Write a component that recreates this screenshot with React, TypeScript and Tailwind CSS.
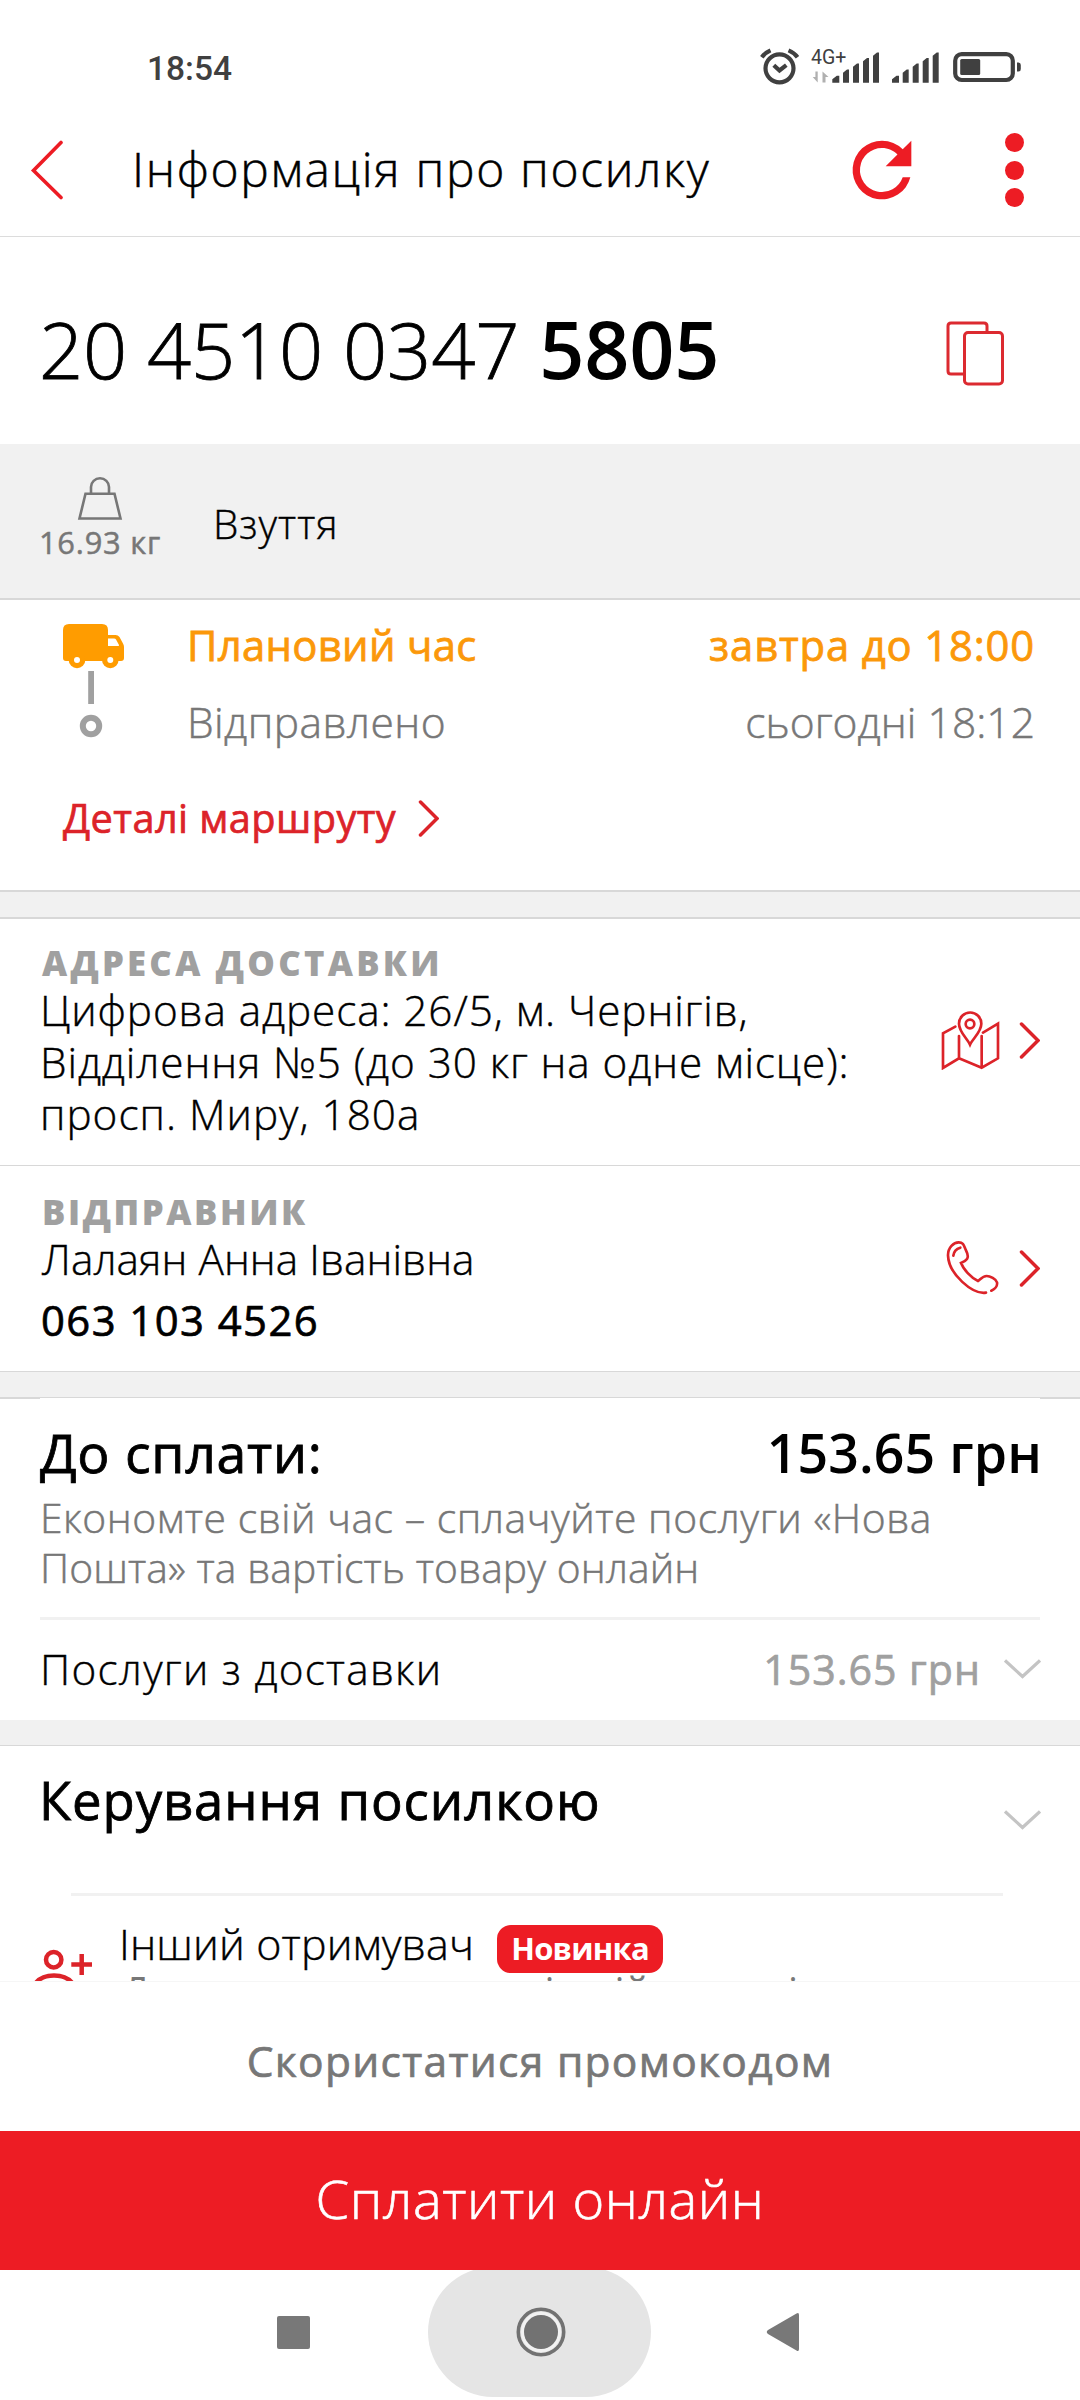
import type { ReactNode } from "react";

const RED = "#ed1c24";
const ICON_RED = "#dc2329";

function StatusIcons() {
  return (
    <svg width="264" height="40" viewBox="758 48 264 40" fill="none">
      {/* Alarm */}
      <g stroke="#404040" strokeWidth="4.2">
        <circle cx="779.5" cy="68.3" r="14" />
        <path d="M761.800 57.2Q765 52.8 770.500 50.4M788.500 50.4q5.8 2.4 9 6.8" />
        <path d="M773.800 65.2l5.7 5.3 6.8-5.3" />
      </g>
      <text x="811" y="63.7" fontSize="19.5" fontFamily="Roboto" fill="#404040">
        4G+
      </text>
      <path
        d="M817.7 71.5v11l-5-5.5h2.7v-5.5zM822.5 82.5v-11l6 5.5h-3v5.5z"
        fill="#b0b0b0"
      />
      <g fill="#404040">
        <path d="M832.3 82.7v-3.5l4.5-3.5h2.5v7zM843 82.7v-10l4-3.2h2v13.2zM853 82.7v-16l4-3.2h2v19.2zM863 82.7v-21.5l4-3.2h2v24.7zM873 82.7v-27l4-3.2h2v30.2z" />
        <path d="M892 82.7v-3.5l4.5-3.5h2.5v7zM902.7 82.7v-10l4-3.2h2v13.2zM912.7 82.7v-16l4-3.2h2v19.2zM922.7 82.7v-21.5l4-3.2h2v24.7zM932.7 82.7v-27l4-3.2h2v30.2z" />
      </g>
      {/* Battery */}
      <rect x="955.2" y="54.2" width="57.6" height="25.8" rx="6.5" stroke="#404040" strokeWidth="4.2" />
      <rect x="960.2" y="59" width="20" height="16" rx="1.5" fill="#404040" />
      <path d="M1017 62.5h1.5q2.3 0 2.3 2.5v4q0 2.5-2.3 2.5h-1.5z" fill="#404040" />
    </svg>
  );
}

function WeightIcon() {
  return (
    <svg width="46" height="43" viewBox="0 0 46 43" fill="none" stroke="#777" strokeWidth="2.6">
      <path d="M8.5 16.7h29l6 24.8h-41z" />
      <path d="M14 16.5V10a9 8.7 0 0118 0v6.5" />
    </svg>
  );
}

function RouteIcon() {
  return (
    <svg width="62" height="114" viewBox="63 624 62 114">
      <path
        d="M69 624h33q6 0 6 6v5h7.5q2.5 0 4 2l3.5 6.5q1 1.5 1 3.5V658q0 3-3 3H66q-3 0-3-3v-28q0-6 6-6z"
        fill="#ff9c00"
      />
      <path d="M108 638.5h6q1.5 0 2 1l3 5.5q.5 1-1 1h-10z" fill="#fff" />
      <circle cx="77" cy="660" r="8.3" fill="#ff9c00" />
      <circle cx="110.3" cy="660" r="8.3" fill="#ff9c00" />
      <circle cx="77" cy="660" r="3" fill="#fff" />
      <circle cx="110.3" cy="660" r="3" fill="#fff" />
      <rect x="88.2" y="671" width="5.8" height="33" fill="#a0a0a0" />
      <circle cx="91" cy="726" r="8.2" fill="none" stroke="#a0a0a0" strokeWidth="6" />
    </svg>
  );
}

function MapIcon() {
  return (
    <svg width="60" height="60" viewBox="120 90 180 180" fill="none" stroke={ICON_RED} strokeWidth="8" strokeLinecap="round">
      <path d="M166 140l-37 20v104l48-29 68 28 49-28V131l-45 27M177 168v67M245 168v95" />
      <path d="M210 194c-8-18-33-38-33-63a33.5 33.5 0 0167 0c0 25-26 45-34 63z" />
      <circle cx="210" cy="132" r="13" />
    </svg>
  );
}

function PhoneIcon() {
  return (
    <svg width="54" height="56" viewBox="142 782 162 168" fill="none" stroke={ICON_RED} strokeWidth="8" strokeLinecap="round">
      <path d="M262 940C222 946 150 885 148 828c0-24 17-39 32-39 16 0 16 12 22 24 5 10 8 19 3 26-4 6-11 9-18 12 8 20 31 45 51 54 7-5 14-15 26-15 10 0 28 9 31 19 2 10-6 20-17 25" />
      <path d="M164 829q2-19 21-24" />
    </svg>
  );
}

function ChevronRight() {
  return (
    <svg width="21" height="37" viewBox="0 0 21 37" fill="none" stroke={ICON_RED} strokeWidth="3.5" strokeLinecap="round">
      <path d="M2.5 2L19 18.5 2.5 35" />
    </svg>
  );
}

function ChevronDown() {
  return (
    <svg width="37" height="20" viewBox="0 0 37 20" fill="none" stroke="#c4c4c4" strokeWidth="3.2" className="shrink-0">
      <path d="M1 1.5l17.5 16L36 1.5" />
    </svg>
  );
}

interface ContactRowProps {
  title: string;
  titleClass: string;
  icon: ReactNode;
  children: ReactNode;
}

function ContactRow({ title, titleClass, icon, children }: ContactRowProps) {
  return (
    <div className="flex items-start justify-between px-10">
      <div>
        <h3 className={`h-10 pt-px pl-[2px] text-[34.7px] leading-[40px] font-extrabold text-[#a0a0a0] ${titleClass}`}>
          {title}
        </h3>
        {children}
      </div>
      {icon}
    </div>
  );
}

export default function App() {
  return (
    <div className="flex h-[2400px] w-[1080px] flex-col overflow-hidden bg-white font-['Open_Sans',sans-serif] whitespace-nowrap text-black">
      {/* Status bar */}
      <div className="flex h-[136px] shrink-0 items-center justify-between pr-[58px] pl-[147px]">
        <span className="pt-[2px] font-['Roboto',sans-serif] text-[33.5px] font-medium text-[#404040]">18:54</span>
        <StatusIcons />
      </div>

      {/* Header */}
      <header className="flex h-[101px] shrink-0 items-center border-b border-[#dcdcdc] pb-8 pl-[30px]">
        <svg width="34" height="60" viewBox="0 0 34 60" fill="none" stroke={RED} strokeWidth="3.6" strokeLinecap="round">
          <path d="M31 2.5L3.5 30.5 31 57.5" />
        </svg>
        <h1 className="w-[769px] pb-[3px] pl-[68px] text-[47.9px] leading-[60px] font-light tracking-[1.69px] [-webkit-text-stroke:0.5px]">
          Інформація про посилку
        </h1>
        <svg width="88" height="88" viewBox="0 0 24 24" fill={RED} className="ml-[5px]">
          <path d="M17.65 6.35A7.96 7.96 0 0012 4a8 8 0 107.73 10h-2.08A6 6 0 1112 6c1.66 0 3.14.69 4.22 1.78L13 11h7V4z" />
        </svg>
        <div className="ml-[79px] flex flex-col gap-[8.5px]">
          <span className="size-[19px] rounded-full bg-[#ed1c24]" />
          <span className="size-[19px] rounded-full bg-[#ed1c24]" />
          <span className="size-[19px] rounded-full bg-[#ed1c24]" />
        </div>
      </header>

      {/* Parcel number */}
      <section className="flex h-[207px] shrink-0 items-center justify-between pt-[15px] pr-[75px] pl-[39px]">
        <div className="flex items-baseline gap-[20px] leading-[100px]">
          <span className="text-[77.5px] font-light tracking-[-0.2px] [-webkit-text-stroke:0.8px]">20 4510 0347</span>
          <span className="text-[79.2px] font-semibold tracking-[-0.3px]">5805</span>
        </div>
        <div className="pt-[10px]">
          <svg width="59" height="66" viewBox="946 320 59 66" fill="none" stroke="#dc2a30" strokeWidth="3">
            <path d="M963 374h-12q-3 0-3-3v-45q0-3 3-3h33q3 0 3 3v6" />
            <rect x="964.5" y="332.5" width="38" height="51.5" rx="3.5" />
          </svg>
        </div>
      </section>

      {/* Weight and description */}
      <section className="flex h-[156px] shrink-0 border-b-2 border-[#d8d8d8] bg-[#f1f1f1] pl-[39px]">
        <div className="flex w-[122px] flex-col items-center pt-[33px]">
          <WeightIcon />
          <span className="mt-[7px] text-[30.8px] leading-[30px] tracking-[0.8px] text-[#777] [-webkit-text-stroke:0.5px]">16.93 кг</span>
        </div>
        <span className="pt-[50px] pl-[52px] text-[40.4px] leading-[60px] font-light tracking-[1px] [-webkit-text-stroke:0.4px]">Взуття</span>
      </section>

      {/* Route */}
      <section className="h-[290px] shrink-0">
        <div className="flex pt-[19px]">
          <div className="w-[187px] pt-[5px] pl-[63px]">
            <RouteIcon />
          </div>
          <div className="flex flex-1 flex-col gap-[25px] pr-[45px]">
            <div className="flex justify-between text-[41.8px] leading-[52px] text-[#fb980a] [-webkit-text-stroke:0.8px]">
              <span className="tracking-[0.31px]">Плановий час</span>
              <span className="tracking-[0.84px]">завтра до 18:00</span>
            </div>
            <div className="flex justify-between text-[42.5px] leading-[52px] font-light text-[#777] [-webkit-text-stroke:0.5px]">
              <span className="tracking-[0.43px]">Відправлено</span>
              <span className="tracking-[0.05px]">сьогодні 18:12</span>
            </div>
          </div>
        </div>
        <div className="mt-[44px] flex items-center gap-[22px] pl-[63px]">
          <span className="text-[39.7px] leading-[52px] tracking-[0.43px] text-[#dc2329] [-webkit-text-stroke:0.7px]">Деталі маршруту</span>
          <ChevronRight />
        </div>
      </section>

      <div className="h-[29px] shrink-0 border-y-2 border-[#d8d8d8] bg-[#f1f1f1]" />

      {/* Delivery address */}
      <section className="h-[247px] shrink-0 border-b border-[#d8d8d8] pt-[23px]">
        <ContactRow
          title="АДРЕСА ДОСТАВКИ"
          titleClass="tracking-[3.25px]"
          icon={
            <div className="flex items-center gap-[19px] pt-[68px]">
              <MapIcon />
              <ChevronRight />
            </div>
          }
        >
          <div className="mt-[2px] text-[42.3px] leading-[52px] font-light [-webkit-text-stroke:0.4px]">
            <p className="tracking-[0.9px]">Цифрова адреса: 26/5, м. Чернігів,</p>
            <p className="tracking-[0.9px]">Відділення №5 (до 30 кг на одне місце):</p>
            <p className="tracking-[1px]">просп. Миру, 180а</p>
          </div>
        </ContactRow>
      </section>

      {/* Sender */}
      <section className="h-[205px] shrink-0 pt-[25px]">
        <ContactRow
          title="ВІДПРАВНИК"
          titleClass="tracking-[2.6px]"
          icon={
            <div className="flex items-center gap-[19px] pt-[49px]">
              <PhoneIcon />
              <ChevronRight />
            </div>
          }
        >
          <p className="mt-[2px] pl-[2px] text-[42.3px] leading-[52px] font-light tracking-[0.08px] [-webkit-text-stroke:0.4px]">
            Лалаян Анна Іванівна
          </p>
          <p className="mt-[9px] pl-[1px] text-[41.8px] leading-[52px] tracking-[1.45px] [-webkit-text-stroke:0.7px]">063 103 4526</p>
        </ContactRow>
      </section>

      <div className="h-[27px] shrink-0 border-y border-[#d8d8d8] bg-[#f1f1f1]" />
      <div className="flex h-px shrink-0 justify-between">
        <span className="w-10 bg-[#d8d8d8]" />
        <span className="w-10 bg-[#d8d8d8]" />
      </div>

      {/* Payment */}
      <section className="h-[321px] shrink-0 px-10 pt-[24px]">
        <div className="flex justify-between text-[53.6px] leading-[60px]">
          <span className="tracking-[0.7px] [-webkit-text-stroke:0.8px]">До сплати:</span>
          <span className="mr-[-2px] font-semibold tracking-[0.1px]">153.65 грн</span>
        </div>
        <p className="mt-[9px] text-[40.8px] leading-[50px] font-light text-[#777] [-webkit-text-stroke:0.5px]">
          <span className="tracking-[0.55px]">Економте свій час – сплачуйте послуги «Нова</span>
          <br />
          <span className="tracking-[0.08px]">Пошта» та вартість товару онлайн</span>
        </p>
        <div className="mt-[25px] flex h-[103px] items-center border-t-[3px] border-[#f1f1f1] pb-[2px]">
          <span className="flex-1 text-[42.3px] font-light tracking-[1.25px] [-webkit-text-stroke:0.4px]">Послуги з доставки</span>
          <span className="mr-[23px] pt-px text-[41.1px] tracking-[1px] text-[#a0a0a0] [-webkit-text-stroke:0.7px]">153.65 грн</span>
          <div className="mr-[-1px]">
            <ChevronDown />
          </div>
        </div>
      </section>

      <div className="h-[26px] shrink-0 border-b border-[#d8d8d8] bg-[#f1f1f1]" />

      <section className="h-[236px] shrink-0 overflow-hidden border-b border-[#f6f6f6] pt-[24px]">
        <div className="flex items-start justify-between px-[39px]">
          <h2 className="text-[52.7px] leading-[60px] tracking-[0.9px] [-webkit-text-stroke:0.8px]">Керування посилкою</h2>
          <div className="pt-[40px]">
            <ChevronDown />
          </div>
        </div>
        <div className="mt-[63px] ml-[71px] h-[3px] w-[932px] bg-[#f1f1f1]" />
        <div className="flex pt-[22px] pl-[33px]">
          <svg width="60" height="60" viewBox="34 1949 60 60" fill="none" stroke={ICON_RED} strokeWidth="4.5" className="mt-[31px] shrink-0">
            <circle cx="54.7" cy="1959.7" r="7.7" />
            <path d="M72.3 1964.4H93M82.7 1954v21M36 1984q6-8.5 19-8.5t19 8.5v14H36z" />
          </svg>
          <div className="pl-[26px]">
            <div className="flex items-start">
              <span className="text-[43px] leading-[52px] font-light tracking-[0.13px] [-webkit-text-stroke:0.4px]">Інший отримувач</span>
              <span className="mt-[7px] ml-[23px] h-12 w-[166px] rounded-[14px] bg-[#ed1c24] text-center text-[31px] leading-[46px] font-bold tracking-[-0.8px] text-white">
                Новинка
              </span>
            </div>
            <p className="mt-[-7px] pl-[3px] text-[39.5px] leading-[50px] text-[#777]">
              Доручити отримання іншій людині
            </p>
          </div>
        </div>
      </section>

      {/* Footer actions */}
      <button className="h-[149px] shrink-0 pt-2 text-[42.5px] tracking-[1.3px] text-[#777] [-webkit-text-stroke:0.7px]">
        Скористатися промокодом
      </button>
      <button className="h-[139px] shrink-0 bg-[#ed1c24] pb-[4px] text-[54.2px] font-light tracking-[0.55px] text-white [-webkit-text-stroke:0.6px]">
        Сплатити онлайн
      </button>

      {/* Navigation bar */}
      <nav className="flex h-[130px] shrink-0 items-center overflow-hidden pb-[6px] pl-[277px]">
        <span className="size-[33px] rounded-[2px] bg-[#787878]" />
        <div className="ml-[118px] flex h-[130px] w-[223px] shrink-0 items-center justify-center rounded-full bg-[#e5e5e5] pl-[2px]">
          <svg width="50" height="50" viewBox="0 0 50 50">
            <circle cx="25" cy="25" r="22.7" fill="none" stroke="#727272" strokeWidth="3.6" />
            <circle cx="25" cy="25" r="18.5" fill="none" stroke="#f2f2f2" strokeWidth="3" />
            <circle cx="25" cy="25" r="17" fill="#727272" />
          </svg>
        </div>
        <svg width="34" height="40" viewBox="0 0 34 40" className="ml-[115px]">
          <path d="M30.5 1.5q2.5-1.5 2.5 1.5v34q0 3-2.5 1.5L2 22q-2.5-2 0-4z" fill="#787878" />
        </svg>
      </nav>
    </div>
  );
}
